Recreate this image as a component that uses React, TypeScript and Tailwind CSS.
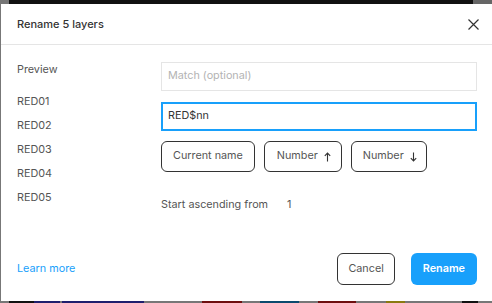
function Arrow({ up }: { up: boolean }) {
  return (
    <svg width="7" height="10" viewBox="0 0 7 10" fill="none" stroke="#333" strokeWidth="1.1" className={up ? "" : "rotate-180"}>
      <path d="M3.5 9.5V1M0.8 3.8L3.5 1L6.2 3.8" />
    </svg>
  )
}

const names = ["RED01", "RED02", "RED03", "RED04", "RED05"]

export default function App() {
  return (
    <div className="w-[492px] h-[303px] bg-[#6f6f6f] flex flex-col overflow-hidden" style={{ fontFamily: "Inter, 'Noto Sans', sans-serif" }}>
      <div className="h-[4px] flex">
        <div className="w-[9px] bg-[#777]" />
        <div className="w-[464px] bg-[#111]" />
        <div className="flex-1 bg-[#666]" />
      </div>
      <div className="flex-1 flex">
        <div className="w-[1px] bg-[#777]" />
        <div className="flex-1 bg-white flex flex-col">
          <div className="h-[41px] border-b border-[#e5e5e5] flex items-center justify-between pl-4 pr-[13px]">
            <span className="text-[11px] font-medium text-[#333]">Rename 5 layers</span>
            <svg width="11" height="11" viewBox="0 0 11 11" stroke="#333" strokeWidth="1.2">
              <path d="M0.5 0.5L10.5 10.5M10.5 0.5L0.5 10.5" />
            </svg>
          </div>
          <div className="flex-1 flex flex-col pl-4 pr-[15px] pt-[17px] pb-[16px] text-[10.8px] text-[#555]">
            <div className="flex">
              <div className="w-[144px] flex flex-col">
                <div className="h-[16px] leading-[16px]">Preview</div>
                <div className="flex flex-col gap-[8px] mt-[16px]">
                  {names.map((n) => (
                    <div key={n} className="h-[16px] leading-[16px]">{n}</div>
                  ))}
                </div>
              </div>
              <div className="flex-1 flex flex-col">
                <div className="h-[29px] border border-[#e5e5e5] flex items-center px-[6px] text-[#b3b3b3]">Match (optional)</div>
                <div className="h-[29px] mt-[11px] border-2 border-[#18a0fb] flex items-center px-[5px] text-[#333]">RED$nn</div>
                <div className="flex gap-[9px] mt-[10px]">
                  <div className="h-[31px] px-[11px] border border-[#333] rounded-[6px] flex items-center">Current name</div>
                  <div className="h-[31px] pl-[12px] pr-[10px] border border-[#333] rounded-[6px] flex items-center gap-[6px]">Number <Arrow up /></div>
                  <div className="h-[31px] pl-[11px] pr-[9px] border border-[#333] rounded-[6px] flex items-center gap-[6px]">Number <Arrow up={false} /></div>
                </div>
                <div className="flex mt-[25px] h-[16px] leading-[16px]">
                  <span className="w-[126px]">Start ascending from</span>
                  <span>1</span>
                </div>
              </div>
            </div>
            <div className="mt-auto flex items-center justify-between">
              <a className="text-[#18a0fb]">Learn more</a>
              <div className="flex gap-[16px]">
                <div className="h-[32px] px-[10px] border border-[#333] rounded-[6px] flex items-center">Cancel</div>
                <div className="h-[32px] px-[12px] bg-[#18a0fb] rounded-[6px] flex items-center text-white font-semibold">Rename</div>
              </div>
            </div>
          </div>
        </div>
      </div>
      <div className="h-[2px] flex">
        <div className="w-[9px] bg-[#777]" />
        <div className="w-[25px] bg-[#111]" />
        <div className="w-[26px] bg-[#1f1f6e]" />
        <div className="w-[2px] bg-[#777]" />
        <div className="w-[82px] bg-[#1f1f6e]" />
        <div className="w-[58px] bg-[#777]" />
        <div className="w-[40px] bg-[#6e0f0f]" />
        <div className="w-[18px] bg-[#777]" />
        <div className="w-[39px] bg-[#0b4a6e]" />
        <div className="w-[19px] bg-[#777]" />
        <div className="w-[38px] bg-[#6e0f0f]" />
        <div className="w-[30px] bg-[#777]" />
        <div className="w-[19px] bg-[#8a7a10]" />
        <div className="w-[57px] bg-[#777]" />
        <div className="w-[16px] bg-[#111]" />
        <div className="flex-1 bg-[#777]" />
      </div>
    </div>
  )
}
